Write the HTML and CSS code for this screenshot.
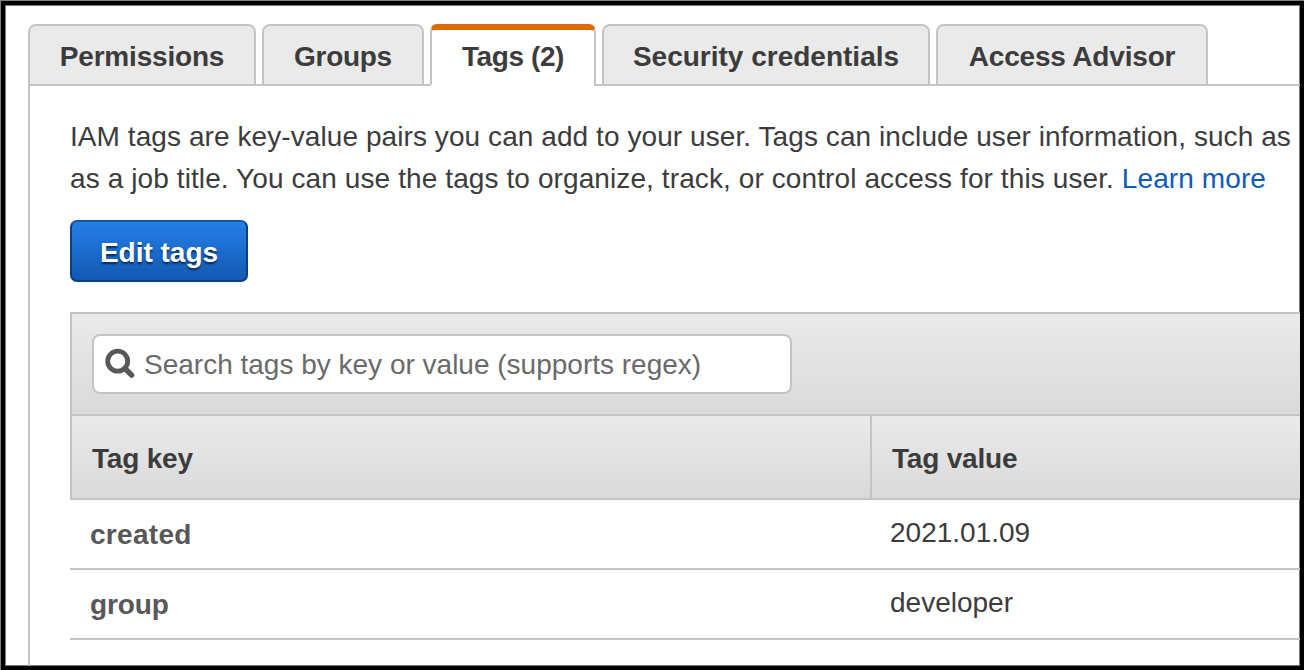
FILE: index.html
```html
<!DOCTYPE html>
<html lang="en">
<head>
<meta charset="utf-8">
<title>IAM user tags</title>
<link rel="stylesheet" href="styles.css">
</head>
<body>
<div class="frame">
<main class="page">
  <nav class="tabs">
    <a class="tab tab-permissions"><span>Permissions</span></a>
    <a class="tab tab-groups"><span>Groups</span></a>
    <a class="tab tab-tags active"><span>Tags (2)</span></a>
    <a class="tab tab-security"><span>Security credentials</span></a>
    <a class="tab tab-advisor"><span>Access Advisor</span></a>
    <div class="tab-rest"></div>
  </nav>
  <section class="panel">
    <p class="description"><span class="line-one">IAM tags are key-value pairs you can add to your user. Tags can include user information, such as</span><br><span class="line-two">as a job title. You can use the tags to organize, track, or control access for this user. <a class="link">Learn more</a></span></p>
    <button class="edit-button">Edit tags</button>
    <div class="table">
      <div class="toolbar">
        <div class="search">
          <svg class="search-icon" width="32" height="32" viewBox="0 0 32 32" fill="none" stroke="#585858">
            <circle cx="14.7" cy="13.2" r="10" stroke-width="4.8"/>
            <path d="M22 20.5L28.6 27.1" stroke-width="5.4" stroke-linecap="round"/>
          </svg>
          <span class="search-text">Search tags by key or value (supports regex)</span>
        </div>
      </div>
      <div class="row head"><div class="cell">Tag key</div><div class="cell">Tag value</div></div>
      <div class="row"><div class="cell key key-created">created</div><div class="cell value">2021.01.09</div></div>
      <div class="row"><div class="cell key">group</div><div class="cell value">developer</div></div>
    </div>
  </section>
</main>
</div>
</body>
</html>
```
FILE: styles.css
```css
* { box-sizing: border-box; }
body {
  margin: 0;
  font-family: "Liberation Sans", Arial, sans-serif;
  font-size: 28px;
  color: #3c3c3c;
}
.frame {
  width: 1304px;
  height: 670px;
  padding: 1px 0 0 1px;
  background: #808080;
}
.page {
  height: 669px;
  border: 4px solid #000;
  box-shadow: inset 0 0 0 1px #777;
  padding: 19px 0 0 23px;
  background: #fff;
  overflow: hidden;
}
.tabs { display: flex; height: 62px; }
.tab {
  position: relative;
  flex: none;
  height: 62px;
  margin-right: 6px;
  border: 2px solid #c4c4c4;
  border-radius: 8px 8px 0 0;
  background: #eaeaea;
  font-weight: bold;
  line-height: 61px;
  text-align: center;
  white-space: nowrap;
}
/* Baseline segment under the gap that follows each tab. */
.tab::after {
  content: "";
  position: absolute;
  left: 100%;
  bottom: -2px;
  width: 10px;
  height: 2px;
  background: #c4c4c4;
}
.tab-permissions { width: 228px; letter-spacing: -0.2px; }
.tab-groups { width: 162px; letter-spacing: -0.3px; }
.tab-tags { width: 166px; letter-spacing: -0.4px; }
.tab-security { width: 328px; }
.tab-advisor { width: 272px; letter-spacing: -0.18px; }
.tab.active {
  border-top: 6px solid #dd6b04;
  border-bottom-color: #fff;
  border-radius: 7px 7px 0 0;
  background: #fff;
  line-height: 53px;
}
.tab-rest { flex: 1; border-bottom: 2px solid #c4c4c4; }
.panel {
  height: 580px;
  border-left: 2px solid #c4c4c4;
  padding: 30px 0 0 40px;
}
.description {
  margin: 0;
  line-height: 42px;
  white-space: nowrap;
}
.line-one { letter-spacing: 0.077px; }
.line-two { letter-spacing: 0.1px; }
.link { color: #0f5bb8; }
.edit-button {
  display: block;
  width: 178px;
  height: 62px;
  margin: 20px 0 30px;
  padding: 4px 0 0;
  border: 2px solid #0e3f7c;
  border-top-color: #1458a8;
  border-radius: 7px;
  background: linear-gradient(#267ee8, #1259b2);
  color: #fff;
  font: bold 28px "Liberation Sans", Arial, sans-serif;
  text-shadow: 0 2px 2px #062a55;
}
.toolbar {
  height: 104px;
  padding: 20px;
  border: 2px solid #c4c4c4;
  border-right: 0;
  background: linear-gradient(#eaeaea, #dadada);
}
.search {
  display: flex;
  align-items: center;
  width: 700px;
  height: 60px;
  border: 2px solid #c4c4c4;
  border-radius: 8px;
  padding-left: 9px;
  background: #fff;
  color: #6a6a6a;
  white-space: nowrap;
}
.search-icon { flex: none; margin-right: 9px; }
.search-text { padding-top: 2px; }
.row {
  display: grid;
  grid-template-columns: 800px 1fr;
  height: 70px;
  border-bottom: 2px solid #c4c4c4;
}
.cell { padding-left: 20px; line-height: 69px; }
.key { color: #585858; font-weight: bold; letter-spacing: -0.1px; }
.key-created { letter-spacing: 0.3px; }
.value { line-height: 66px; }
.head {
  height: 84px;
  background: linear-gradient(#eaeaea, #dadada);
  font-weight: bold;
  letter-spacing: -0.2px;
}
.head .cell { border-left: 2px solid #c4c4c4; line-height: 86px; height: 82px; }
```
